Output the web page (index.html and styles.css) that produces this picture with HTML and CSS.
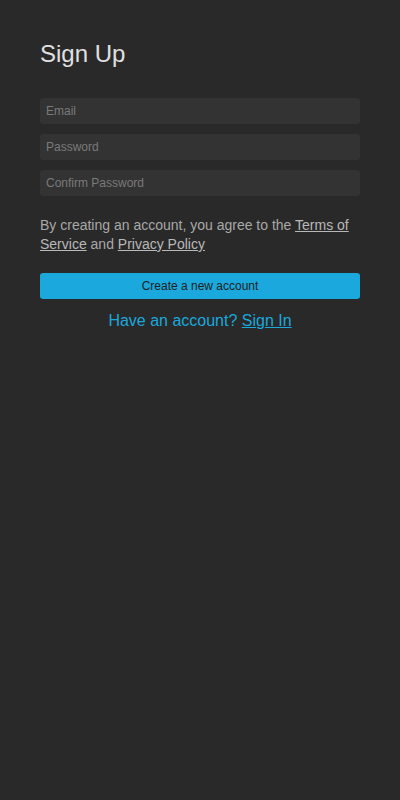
FILE: index.html
```html
<!DOCTYPE html>
<html>
<head>
<meta charset="utf-8">
<link rel="stylesheet" href="styles.css">
</head>
<body>
<main class="page">
  <h1 class="title">Sign Up</h1>
  <form class="form">
    <input class="field" type="email" placeholder="Email">
    <input class="field" type="password" placeholder="Password">
    <input class="field" type="password" placeholder="Confirm Password">
  </form>
  <p class="terms">By creating an account, you agree to the <a href="#">Terms of Service</a> and <a href="#">Privacy Policy</a></p>
  <button class="btn" type="button">Create a new account</button>
  <p class="signin">Have an account? <a href="#">Sign In</a></p>
</main>
</body>
</html>
```
FILE: styles.css
```css
html, body {
  margin: 0;
  padding: 0;
  background: #292929;
  height: 100%;
}
body {
  font-family: "Liberation Sans", Arial, sans-serif;
}
.page {
  padding: 40px 40px;
}
.title {
  margin: 0;
  font-size: 24px;
  font-weight: normal;
  color: #e0e0e0;
  line-height: 28px;
}
.form {
  display: flex;
  flex-direction: column;
  gap: 10px;
  margin-top: 30px;
}
.field {
  box-sizing: border-box;
  height: 26px;
  width: 100%;
  background: #333333;
  border: none;
  border-radius: 3px;
  padding: 0 6px;
  font-family: inherit;
  font-size: 12px;
  color: #ddd;
  outline: none;
}
.field::placeholder {
  color: #7a7a7a;
}
.terms {
  margin: 20px 0 0;
  font-size: 14px;
  line-height: 19px;
  color: #a8a8a8;
}
.terms a {
  color: #b8b8b8;
  text-decoration: underline;
}
.btn {
  display: block;
  box-sizing: border-box;
  width: 100%;
  height: 26px;
  margin-top: 19px;
  border: none;
  border-radius: 3px;
  background: #1ba8dd;
  color: #222;
  font-family: inherit;
  font-size: 12px;
}
.signin {
  margin: 11px 0 0;
  text-align: center;
  font-size: 16px;
  line-height: 22px;
  color: #1ba8dd;
}
.signin a {
  color: #1ba8dd;
  text-decoration: underline;
}
```
